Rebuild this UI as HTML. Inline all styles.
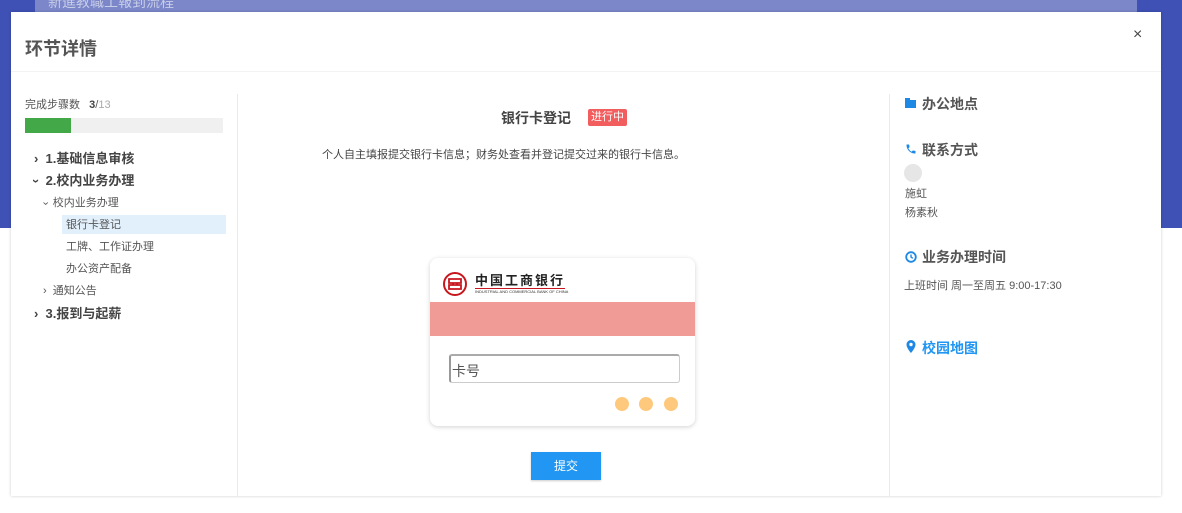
<!DOCTYPE html>
<html><head><meta charset="utf-8"><style>
*{margin:0;padding:0;box-sizing:border-box}
body{width:1182px;height:513px;position:relative;overflow:hidden;background:#fff;font-family:"Liberation Sans","Noto Sans CJK SC",sans-serif;color:#333}
.a{position:absolute}
.t{white-space:nowrap}
</style></head><body>
<div class="a" style="left:0;top:0;width:1182px;height:228px;background:#3f51b5"></div>
<div class="a" style="left:35px;top:0;width:1102px;height:12px;background:#7b87c9"></div>
<div class="a t" style="left:48px;top:-8px;font-size:14px;color:#c8cde8">新進教職工報到流程</div>
<div class="a" style="left:11px;top:12px;width:1150px;height:484px;background:#fff;box-shadow:0 0 3px rgba(0,0,0,.2)"></div>
<div class="a t" style="left:25px;top:35px;font-size:18px;font-weight:bold;color:#555">环节详情</div>
<div class="a t" style="left:1133px;top:26px;font-size:16px;color:#444">×</div>
<div class="a" style="left:11px;top:71px;width:1150px;height:1px;background:#f3f3f3"></div>
<!-- left panel -->
<div class="a t" style="left:25px;top:96px;font-size:11px;color:#555">完成步骤数&nbsp;&nbsp; <b style="color:#444">3</b>/<span style="color:#aaa">13</span></div>
<div class="a" style="left:25px;top:118px;width:198px;height:15px;background:#f0f0f0"></div>
<div class="a" style="left:25px;top:118px;width:46px;height:15px;background:#43a848"></div>
<div class="a" style="left:62px;top:215px;width:164px;height:19px;background:#e2f0fc"></div>
<div class="a t" style="left:34px;top:151px;font-size:13px;font-weight:bold;color:#444;line-height:16px">›&nbsp; 1.基础信息审核</div>
<div class="a t" style="left:34px;top:173px;font-size:13px;font-weight:bold;color:#444;line-height:16px"><span style="display:inline-block;transform:rotate(90deg)">›</span>&nbsp; 2.校内业务办理</div>
<div class="a t" style="left:43px;top:196px;font-size:11px;color:#555;line-height:15px"><span style="display:inline-block;transform:rotate(90deg)">›</span>&nbsp; 校内业务办理</div>
<div class="a t" style="left:66px;top:218px;font-size:11px;color:#555;line-height:15px">银行卡登记</div>
<div class="a t" style="left:66px;top:240px;font-size:11px;color:#555;line-height:15px">工牌、工作证办理</div>
<div class="a t" style="left:66px;top:262px;font-size:11px;color:#555;line-height:15px">办公资产配备</div>
<div class="a t" style="left:43px;top:284px;font-size:11px;color:#555;line-height:15px">›&nbsp; 通知公告</div>
<div class="a t" style="left:34px;top:306px;font-size:13px;font-weight:bold;color:#444;line-height:16px">›&nbsp; 3.报到与起薪</div>
<div class="a" style="left:237px;top:94px;width:1px;height:402px;background:#eaeaea"></div>
<div class="a" style="left:889px;top:94px;width:1px;height:402px;background:#eaeaea"></div>
<!-- center -->
<div class="a t" style="left:501px;top:108px;font-size:14px;font-weight:bold;color:#444">银行卡登记</div>
<div class="a t" style="left:588px;top:109px;font-size:11px;background:#f25d5d;color:#fff;padding:1px 3px;border-radius:2px;line-height:15px">进行中</div>
<div class="a t" style="left:322px;top:146px;font-size:11px;color:#444">个人自主填报提交银行卡信息；财务处查看并登记提交过来的银行卡信息。</div>
<div class="a" style="left:430px;top:258px;width:265px;height:168px;background:#fff;border-radius:8px;box-shadow:0 1px 5px rgba(0,0,0,.18);overflow:hidden">
 <svg class="a" style="left:12px;top:13px" width="26" height="26" viewBox="0 0 26 26"><circle cx="13" cy="13" r="11" fill="none" stroke="#c7161e" stroke-width="2"/><path d="M7 8h12v4h-8v2h8v4H7v-4h8v-2H7z" fill="none" stroke="#c7161e" stroke-width="1.8"/></svg>
 <div class="a t" style="left:45px;top:12px;font-size:13px;font-weight:bold;color:#222;letter-spacing:2px">中国工商银行</div>
 <div class="a" style="left:45px;top:30px;width:90px;height:1px;background:#c7161e"></div>
 <div class="a t" style="left:45px;top:31px;font-size:4px;color:#333">INDUSTRIAL AND COMMERCIAL BANK OF CHINA</div>
 <div class="a" style="left:0;top:44px;width:265px;height:34px;background:#f19b96"></div>
 <div class="a" style="left:19px;top:96px;width:231px;height:29px;border:1px solid #ccc;border-left:2px solid #999;border-top:2px solid #aaa;border-radius:3px"></div>
 <div class="a t" style="left:22px;top:103px;font-size:14px;color:#555">卡号</div>
 <div class="a" style="left:185px;top:139px;width:14px;height:14px;border-radius:7px;background:#fec97c"></div>
 <div class="a" style="left:209px;top:139px;width:14px;height:14px;border-radius:7px;background:#fec97c"></div>
 <div class="a" style="left:234px;top:139px;width:14px;height:14px;border-radius:7px;background:#fec97c"></div>
</div>
<div class="a t" style="left:531px;top:452px;width:70px;height:28px;background:#2196f3;color:#fff;font-size:12px;text-align:center;line-height:28px;box-shadow:0 1px 2px rgba(0,0,0,.2)">提交</div>
<!-- right -->
<svg class="a" style="left:905px;top:97px" width="11" height="11" viewBox="0 0 11 11"><path d="M0 1h5v2h6v8H0z" fill="#1e88e5"/></svg>
<div class="a t" style="left:922px;top:94px;font-size:14px;font-weight:bold;color:#555">办公地点</div>
<svg class="a" style="left:905px;top:143px" width="12" height="12" viewBox="0 0 24 24"><path d="M6.6 10.8a15 15 0 0 0 6.6 6.6l2.2-2.2c.3-.3.7-.4 1-.2 1.1.4 2.3.6 3.6.6.6 0 1 .4 1 1V20c0 .6-.4 1-1 1C10.6 21 3 13.4 3 4c0-.6.4-1 1-1h3.5c.6 0 1 .4 1 1 0 1.3.2 2.5.6 3.6.1.3 0 .7-.2 1z" fill="#1e88e5"/></svg>
<div class="a t" style="left:922px;top:140px;font-size:14px;font-weight:bold;color:#555">联系方式</div>
<div class="a" style="left:904px;top:164px;width:18px;height:18px;border-radius:9px;background:#e6e6e6"></div>
<div class="a t" style="left:905px;top:185px;font-size:11px;color:#555">施虹</div>
<div class="a t" style="left:905px;top:204px;font-size:11px;color:#555">杨素秋</div>
<svg class="a" style="left:905px;top:251px" width="12" height="12" viewBox="0 0 12 12"><circle cx="6" cy="6" r="4.8" fill="none" stroke="#1e88e5" stroke-width="1.8"/><path d="M6 3.5V6l1.8 1.3" fill="none" stroke="#1e88e5" stroke-width="1.4"/></svg>
<div class="a t" style="left:922px;top:247px;font-size:14px;font-weight:bold;color:#555">业务办理时间</div>
<div class="a t" style="left:904px;top:277px;font-size:11px;color:#555">上班时间 周一至周五 9:00-17:30</div>
<svg class="a" style="left:906px;top:340px" width="10" height="13" viewBox="0 0 10 13"><path d="M5 0a4.5 4.5 0 0 0-4.5 4.5C.5 8 5 13 5 13s4.5-5 4.5-8.5A4.5 4.5 0 0 0 5 0zm0 6.2a1.7 1.7 0 1 1 0-3.4 1.7 1.7 0 0 1 0 3.4z" fill="#1e88e5"/></svg>
<div class="a t" style="left:922px;top:338px;font-size:14px;font-weight:bold;color:#2196f3">校园地图</div>
</body></html>
